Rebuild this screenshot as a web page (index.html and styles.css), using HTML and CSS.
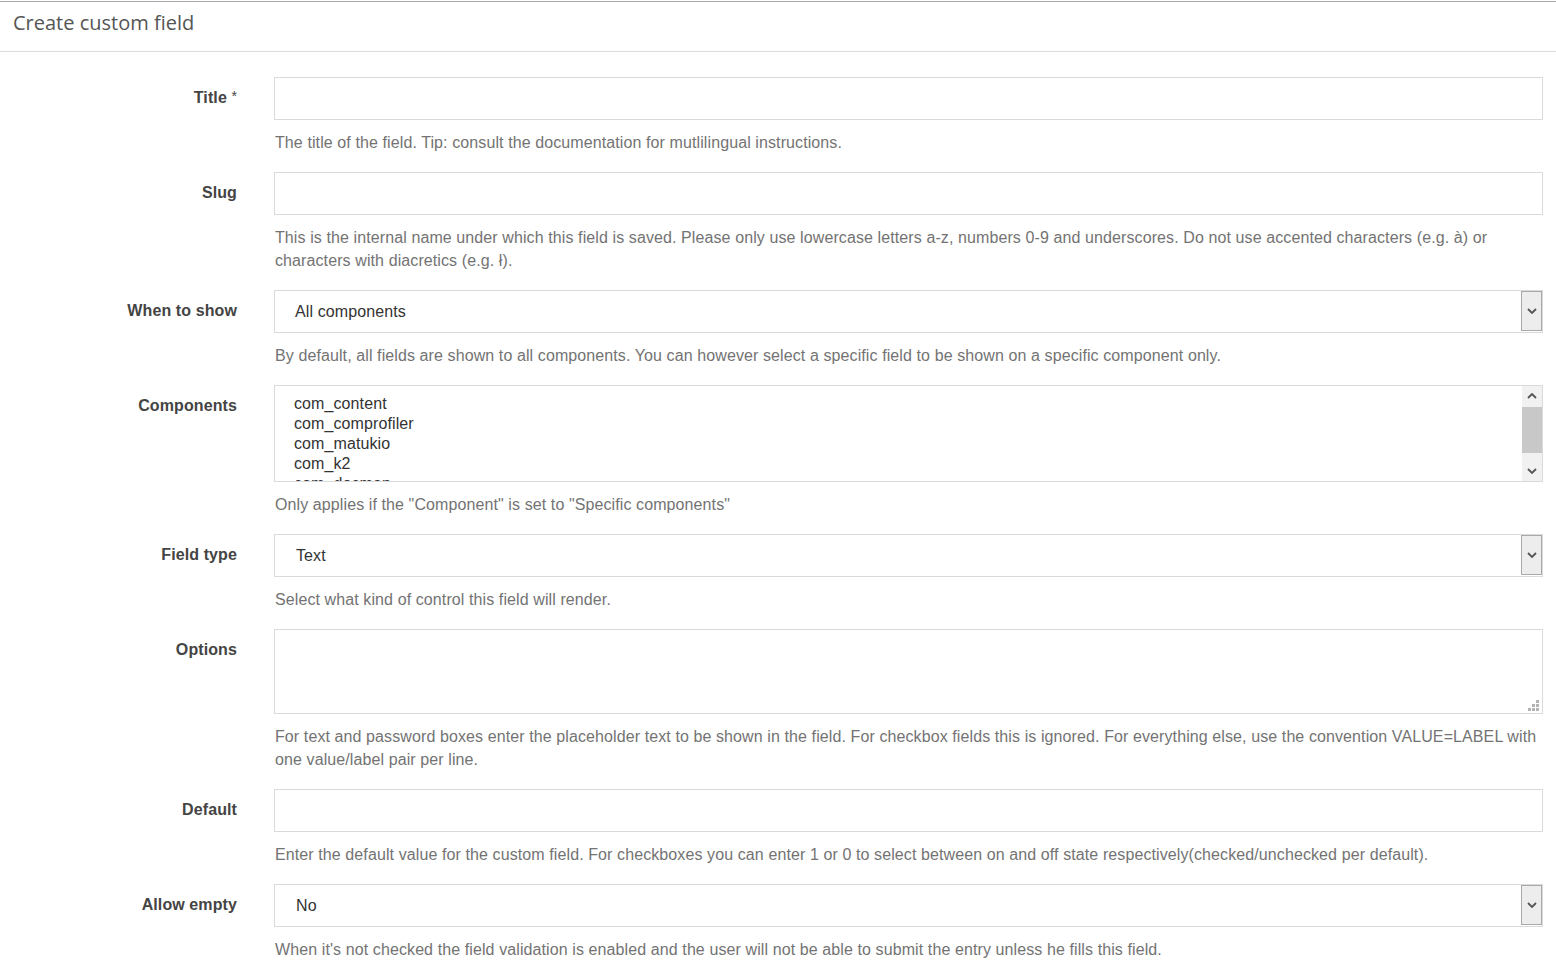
FILE: index.html
```html
<!DOCTYPE html>
<html lang="en">
<head>
<meta charset="utf-8">
<title>Create custom field</title>
<link rel="stylesheet" href="styles.css">
</head>
<body>
<div class="page">
  <header class="page-header">
    <h1 class="page-title">Create custom field</h1>
  </header>
  <form class="form">
    <div class="row">
      <label class="label">Title <span class="req">*</span></label>
      <div class="control">
        <input class="input" type="text">
        <p class="help">The title of the field. Tip: consult the documentation for mutlilingual instructions.</p>
      </div>
    </div>
    <div class="row">
      <label class="label">Slug</label>
      <div class="control">
        <input class="input" type="text">
        <p class="help">This is the internal name under which this field is saved. Please only use lowercase letters a-z, numbers 0-9 and underscores. Do not use accented characters (e.g. à) or characters with diacretics (e.g. ł).</p>
      </div>
    </div>
    <div class="row">
      <label class="label">When to show</label>
      <div class="control">
        <div class="select">
          <span class="select-value">All components</span>
          <span class="select-btn"><svg width="10" height="6" viewBox="0 0 10 6"><path d="M1 1 L5 5 L9 1" fill="none" stroke="#555" stroke-width="1.8"/></svg></span>
        </div>
        <p class="help">By default, all fields are shown to all components. You can however select a specific field to be shown on a specific component only.</p>
      </div>
    </div>
    <div class="row">
      <label class="label">Components</label>
      <div class="control">
        <div class="listbox">
          <ul class="options">
            <li>com_content</li>
            <li>com_comprofiler</li>
            <li>com_matukio</li>
            <li>com_k2</li>
            <li>com_docman</li>
          </ul>
          <div class="scrollbar">
            <span class="sb-arrow"><svg width="10" height="6" viewBox="0 0 10 6"><path d="M1 5 L5 1 L9 5" fill="none" stroke="#555" stroke-width="1.8"/></svg></span>
            <span class="sb-track"><span class="sb-thumb"></span></span>
            <span class="sb-arrow"><svg width="10" height="6" viewBox="0 0 10 6"><path d="M1 1 L5 5 L9 1" fill="none" stroke="#555" stroke-width="1.8"/></svg></span>
          </div>
        </div>
        <p class="help">Only applies if the "Component" is set to "Specific components"</p>
      </div>
    </div>
    <div class="row">
      <label class="label">Field type</label>
      <div class="control">
        <div class="select">
          <span class="select-value select-value-b">Text</span>
          <span class="select-btn"><svg width="10" height="6" viewBox="0 0 10 6"><path d="M1 1 L5 5 L9 1" fill="none" stroke="#555" stroke-width="1.8"/></svg></span>
        </div>
        <p class="help">Select what kind of control this field will render.</p>
      </div>
    </div>
    <div class="row">
      <label class="label">Options</label>
      <div class="control">
        <div class="textarea">
          <svg class="grip" width="11" height="11" viewBox="0 0 11 11"><g fill="#b4b4b4"><rect x="8" y="0" width="3" height="3"/><rect x="4" y="4" width="3" height="3"/><rect x="8" y="4" width="3" height="3"/><rect x="0" y="8" width="3" height="3"/><rect x="4" y="8" width="3" height="3"/><rect x="8" y="8" width="3" height="3"/></g></svg>
        </div>
        <p class="help">For text and password boxes enter the placeholder text to be shown in the field. For checkbox fields this is ignored. For everything else, use the convention VALUE=LABEL with one value/label pair per line.</p>
      </div>
    </div>
    <div class="row">
      <label class="label">Default</label>
      <div class="control">
        <input class="input" type="text">
        <p class="help">Enter the default value for the custom field. For checkboxes you can enter 1 or 0 to select between on and off state respectively(checked/unchecked per default).</p>
      </div>
    </div>
    <div class="row">
      <label class="label">Allow empty</label>
      <div class="control">
        <div class="select">
          <span class="select-value select-value-b">No</span>
          <span class="select-btn"><svg width="10" height="6" viewBox="0 0 10 6"><path d="M1 1 L5 5 L9 1" fill="none" stroke="#555" stroke-width="1.8"/></svg></span>
        </div>
        <p class="help">When it's not checked the field validation is enabled and the user will not be able to submit the entry unless he fills this field.</p>
      </div>
    </div>
  </form>
</div>
</body>
</html>
```
FILE: styles.css
```css
html, body {
  margin: 0;
  padding: 0;
  background: #fff;
  overflow: hidden;
}
body {
  font-family: "Liberation Sans", Arial, sans-serif;
  font-size: 16px;
  letter-spacing: 0.1px;
  color: #333;
}
.page {
  padding-top: 1px;
}
.page-header {
  border-top: 1px solid #a8a8a8;
  border-bottom: 1px solid #dcdcdc;
  padding: 7px 13px 15px;
}
.page-title {
  margin: 0;
  font-family: "Open Sans", sans-serif;
  font-weight: 400;
  font-size: 20px;
  line-height: 27px;
  letter-spacing: 0;
  color: #555;
}
.form {
  padding: 25px 13px 0 0;
}
.row {
  display: grid;
  grid-template-columns: 237px 1fr;
  column-gap: 37px;
  margin-bottom: 18px;
}
.label {
  text-align: right;
  font-weight: 700;
  color: #444;
  line-height: 22px;
  padding-top: 10px;
}
.req {
  font-weight: 400;
  font-size: 14px;
  vertical-align: top;
  position: relative;
  top: -2px;
}
.control {
  min-width: 0;
}
.input {
  display: block;
  box-sizing: border-box;
  width: 100%;
  height: 43px;
  margin: 0;
  border: 1px solid #dadada;
  border-radius: 0;
  background: #fff;
  font: inherit;
  padding: 0 20px;
  outline: none;
}
.help {
  margin: 11px 0 0 1px;
  line-height: 23px;
  color: #737373;
}
.select {
  position: relative;
  box-sizing: border-box;
  height: 43px;
  border: 1px solid #dadada;
  background: #fff;
  display: flex;
  align-items: center;
  padding-left: 20px;
}
.select-value {
  color: #333;
  line-height: 20px;
}
.select-value-b {
  padding-left: 1px;
}
.select-btn {
  position: absolute;
  top: 0;
  right: 0;
  bottom: 1px;
  width: 21px;
  box-sizing: border-box;
  border: 1px solid #a9a9a9;
  background: #ededed;
  display: flex;
  align-items: center;
  justify-content: center;
}
.listbox {
  position: relative;
  box-sizing: border-box;
  height: 97px;
  border: 1px solid #dadada;
  overflow: hidden;
}
.options {
  list-style: none;
  margin: 0;
  padding: 8px 0 0 19px;
  line-height: 20px;
  color: #333;
}
.scrollbar {
  position: absolute;
  top: 0;
  right: 0;
  bottom: 0;
  width: 20px;
  background: #f1f1f1;
  display: flex;
  flex-direction: column;
}
.sb-arrow {
  height: 20px;
  display: flex;
  align-items: center;
  justify-content: center;
}
.sb-track {
  flex: 1;
  position: relative;
}
.sb-thumb {
  display: block;
  height: 46px;
  margin-top: 1px;
  background: #c8c8c8;
}
.textarea {
  position: relative;
  box-sizing: border-box;
  height: 85px;
  border: 1px solid #dadada;
}
.grip {
  position: absolute;
  right: 3px;
  bottom: 2px;
}
```
